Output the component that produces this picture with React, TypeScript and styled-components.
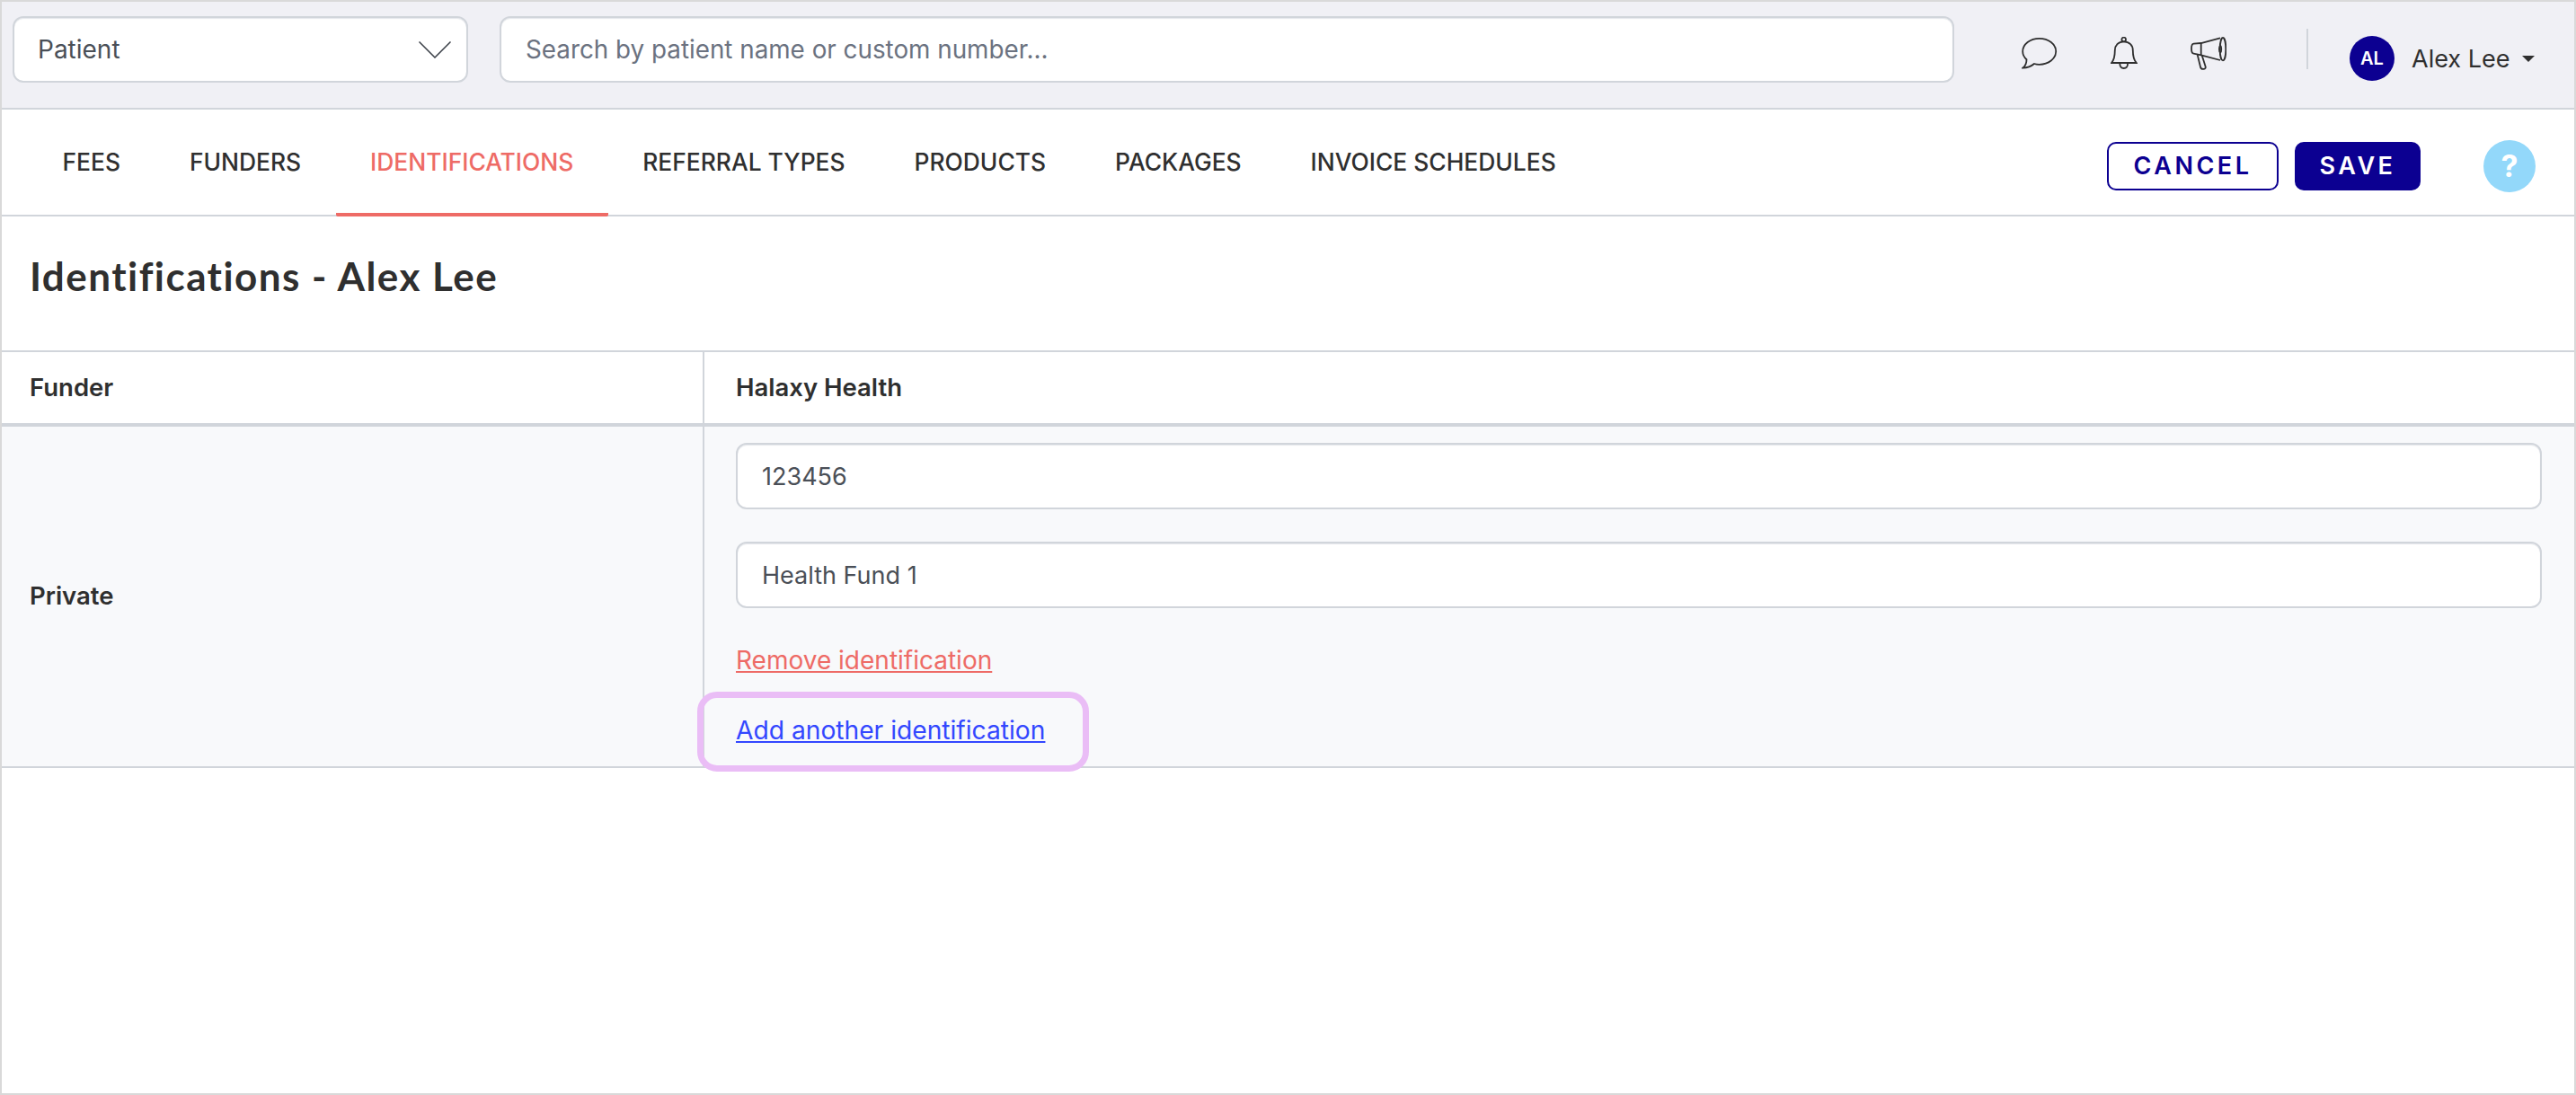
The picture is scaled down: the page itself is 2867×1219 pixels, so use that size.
import * as React from 'react';
import styled, { createGlobalStyle } from 'styled-components';

const GlobalStyle = createGlobalStyle`
  html, body { margin: 0; padding: 0; background: #fff; }
  * { box-sizing: border-box; }
  body { font-family: Inter, "Liberation Sans", sans-serif; color: #2f2f2f; }
`;

const tabs = ['FEES', 'FUNDERS', 'IDENTIFICATIONS', 'REFERRAL TYPES', 'PRODUCTS', 'PACKAGES', 'INVOICE SCHEDULES'];

export default function App() {
  return (
    <Page>
      <GlobalStyle />
      <TopBar>
        <SelectBox>
          <span>Patient</span>
          <svg width="36" height="19" viewBox="0 0 36 19" fill="none" stroke="#3a3f47" strokeWidth="1.5">
            <path d="M0.500 0.500 L18 18 L35.500 0.500" />
          </svg>
        </SelectBox>
        <SearchBox>Search by patient name or custom number...</SearchBox>
        <IconGroup>
          <svg width="40" height="36" viewBox="0 0 40 36" fill="none" stroke="#2f2f2f" strokeWidth="1.800">
            <path d="M14 30 C15.500 30.500 17.500 30.800 19.700 30.800 C30 30.800 38.200 24.300 38.200 16.300 C38.200 8.300 30 1.800 19.700 1.800 C9.500 1.800 1.200 8.300 1.200 16.300 C1.200 20 3 23 5.500 25.200 C5.500 29 4 32.500 1.500 34.500 C6 34.500 10.500 33 14 30 Z" />
          </svg>
          <svg width="30" height="36" viewBox="0 0 30 36" fill="none" stroke="#2f2f2f" strokeWidth="1.800">
            <circle cx="14.700" cy="3" r="2.300" />
            <path d="M14.700 5.300 C8.500 5.300 4.800 9.500 4.800 15 C4.800 21 3.800 26 1 29 L28.800 29 C26 26 24.800 21 24.800 15 C24.800 9.500 21 5.300 14.700 5.300 Z" />
            <path d="M10.300 29.500 C10.300 33 12 35 14.700 35 C17.400 35 19.100 33 19.100 29.500" />
          </svg>
          <svg width="40" height="37" viewBox="0 0 40 37" fill="none" stroke="#2f2f2f" strokeWidth="1.800">
            <path d="M33 1.300 L11.700 7 L3.500 7.700 C1.500 8 1 10 1 13 C1 16 1.500 18.500 3.500 18.700 L11.700 20.300 L33 26" />
            <ellipse cx="36" cy="13.700" rx="3.300" ry="12.700" />
            <path d="M11.700 7 L11.700 20.300" />
            <path d="M33.200 9.800 C31.500 11 31.500 16.500 33.200 17.500 C34.600 16.500 34.600 11 33.200 9.800 Z" />
            <path d="M7.700 20 L11 33.500 C11.300 35.500 13 36 14.800 35.800 C16.500 35.500 17 34.500 16.600 33 L12.800 21" />
          </svg>
        </IconGroup>
        <Divider />
        <UserMenu>
          <Avatar>AL</Avatar>
          <UserName>Alex Lee</UserName>
          <Caret />
        </UserMenu>
      </TopBar>

      <TabBar>
        <TabList>
          {tabs.map((t) => (
            <Tab key={t} $active={t === 'IDENTIFICATIONS'}>{t}</Tab>
          ))}
        </TabList>
        <Actions>
          <CancelButton>CANCEL</CancelButton>
          <SaveButton>SAVE</SaveButton>
          <HelpButton>?</HelpButton>
        </Actions>
      </TabBar>

      <TitleRow>
        <Title>Identifications - Alex Lee</Title>
      </TitleRow>

      <HeadRow>
        <HeadCell>Funder</HeadCell>
        <HeadCellWide>Halaxy Health</HeadCellWide>
      </HeadRow>

      <BodyRow>
        <FunderCell>Private</FunderCell>
        <FieldCell>
          <FieldBox>123456</FieldBox>
          <FieldBox>Health Fund 1</FieldBox>
          <RemoveLink href="#">Remove identification</RemoveLink>
          <AddWrap>
            <AddLink href="#">Add another identification</AddLink>
            <Highlight />
          </AddWrap>
        </FieldCell>
      </BodyRow>
    </Page>
  );
}

const Page = styled.div`
  width: 2867px;
  height: 1219px;
  border: 2px solid #d9d9d9;
  background: #fff;
  overflow: hidden;
`;

const TopBar = styled.div`
  height: 120px;
  background: #f0f0f5;
  border-bottom: 2px solid #d1d5db;
  display: flex;
  align-items: flex-start;
  padding: 16px 0 0 12px;
`;

const SelectBox = styled.div`
  width: 507px;
  height: 74px;
  flex: none;
  background: #fff;
  border: 2px solid #d1d5db;
  border-radius: 12px;
  box-shadow: inset 0 1px 1px #e5e7eb;
  display: flex;
  align-items: center;
  justify-content: space-between;
  padding: 0 17px 0 26px;
  font-size: 28px;
  color: #4a4f57;
`;

const SearchBox = styled.div`
  flex: none;
  width: 1619px;
  height: 74px;
  margin-left: 35px;
  background: #fff;
  border: 2px solid #d1d5db;
  border-radius: 12px;
  box-shadow: inset 0 1px 1px #e5e7eb;
  display: flex;
  align-items: center;
  padding: 0 27px;
  font-size: 27.800px;
  color: #6b7280;
`;

const IconGroup = styled.div`
  display: flex;
  align-items: center;
  gap: 59px;
  margin: 4px 0 0 75px;
  height: 74px;
`;

const Divider = styled.div`
  width: 2px;
  height: 45px;
  margin: 14px 0 0 89px;
  background: #d1d5db;
`;

const UserMenu = styled.div`
  display: flex;
  align-items: center;
  margin: 22px 0 0 46px;
`;

const Avatar = styled.div`
  width: 50px;
  height: 50px;
  border-radius: 50%;
  background: #0c0091;
  color: #fff;
  font-size: 20px;
  font-weight: 600;
  display: flex;
  align-items: center;
  justify-content: center;
`;

const UserName = styled.div`
  font-size: 27px;
  margin-left: 19px;
  color: #2f2f2f;
`;

const Caret = styled.div`
  width: 0;
  height: 0;
  margin-left: 14px;
  border-left: 7px solid transparent;
  border-right: 7px solid transparent;
  border-top: 7px solid #2f2f2f;
`;

const TabBar = styled.div`
  height: 119px;
  border-bottom: 2px solid #d1d5db;
  display: flex;
  align-items: stretch;
  justify-content: space-between;
  padding: 0 43px 0 29px;
`;

const TabList = styled.div`
  display: flex;
  align-items: stretch;
`;

const Tab = styled.div<{ $active?: boolean }>`
  display: flex;
  align-items: center;
  padding: 0 38.500px;
  margin-bottom: -2px;
  font-size: 26.400px;
  font-weight: 500;
  color: ${(p) => (p.$active ? '#ee6b66' : '#2f2f2f')};
  border-bottom: 4px solid ${(p) => (p.$active ? '#ee6b66' : 'transparent')};
  border-radius: 0 0 2px 2px;
`;

const Actions = styled.div`
  display: flex;
  align-items: center;
  padding-top: 8px;
`;

const CancelButton = styled.div`
  width: 191px;
  height: 54px;
  border: 2px solid #0c0091;
  border-radius: 10px;
  color: #0c0091;
  font-size: 27px;
  font-weight: 600;
  letter-spacing: 3.500px;
  display: flex;
  align-items: center;
  justify-content: center;
`;

const SaveButton = styled(CancelButton)`
  width: 140px;
  margin-left: 18px;
  background: #0c0091;
  color: #fff;
`;

const HelpButton = styled.div`
  width: 58px;
  height: 58px;
  margin-left: 70px;
  border-radius: 50%;
  background: #93d8fa;
  color: #fff;
  font-size: 34px;
  font-weight: 700;
  display: flex;
  align-items: center;
  justify-content: center;
`;

const TitleRow = styled.div`
  height: 151px;
  padding: 40px 0 0 31px;
  border-bottom: 2px solid #d1d5db;
`;

const Title = styled.h1`
  margin: 0;
  font-family: Lato, sans-serif;
  font-size: 44px;
  font-weight: 700;
  letter-spacing: 1.450px;
  color: #2f2f2f;
`;

const HeadRow = styled.div`
  height: 83px;
  display: flex;
  border-bottom: 4px solid #d1d5db;
`;

const HeadCell = styled.div`
  width: 780px;
  flex: none;
  display: flex;
  align-items: center;
  padding: 0 0 2px 31px;
  font-size: 27.500px;
  font-weight: 600;
  color: #2f2f2f;
`;

const HeadCellWide = styled(HeadCell)`
  flex: 1;
  border-left: 2px solid #d1d5db;
  padding-left: 35px;
`;

const BodyRow = styled.div`
  height: 380px;
  display: flex;
  background: #f8f9fb;
  border-bottom: 2px solid #d1d5db;
`;

const FunderCell = styled.div`
  width: 780px;
  flex: none;
  display: flex;
  align-items: center;
  padding: 0 0 2px 31px;
  font-size: 27.500px;
  font-weight: 600;
`;

const FieldCell = styled.div`
  flex: 1;
  border-left: 2px solid #d1d5db;
  padding: 18px 36px 0 35px;
  display: flex;
  flex-direction: column;
  align-items: flex-start;
`;

const FieldBox = styled.div`
  width: 100%;
  height: 74px;
  margin-bottom: 36px;
  background: #fff;
  border: 2px solid #d1d5db;
  border-radius: 12px;
  box-shadow: inset 0 1px 1px #e5e7eb;
  display: flex;
  align-items: center;
  padding: 0 27px;
  font-size: 27px;
  color: #4a4f57;
`;

const RemoveLink = styled.a`
  font-size: 28px;
  color: #ee6b66;
  margin-top: 5px;
`;

const AddWrap = styled.div`
  position: relative;
  margin-top: 44px;
`;

const AddLink = styled.a`
  font-size: 28.200px;
  color: #3347ff;
`;

const Highlight = styled.div`
  position: absolute;
  left: -43px;
  right: -49px;
  top: -26px;
  bottom: -29px;
  border: 7px solid #eabdf6;
  border-radius: 22px;
  pointer-events: none;
`;
